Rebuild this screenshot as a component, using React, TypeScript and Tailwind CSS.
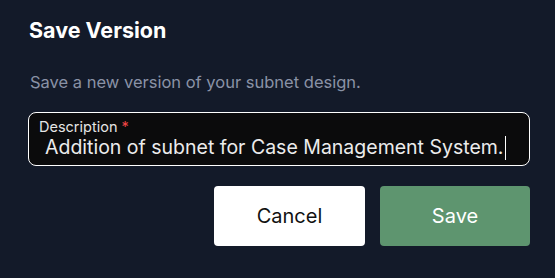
export default function App() {
  return (
    <div className="w-[555px] h-[278px] bg-[#131a29] font-['Inter',sans-serif] pl-[28px] pr-[25px] pt-[15px]">
      <h2 className="pl-[1px] text-[21.5px] leading-[30px] font-bold text-white">Save Version</h2>
      <p className="mt-[26px] pl-[2px] text-[16.5px] leading-[22px] text-[#8a92a6]">
        Save a new version of your subnet design.
      </p>
      <div className="mt-[19px] h-[54px] rounded-[8px] border border-white bg-[#0b0b0c] px-[10px] pt-[6px]">
        <label className="block text-[14.5px] leading-[16px] text-[#e5e5e5]">
          Description <span className="text-[#ef4444]">*</span>
        </label>
        <div className="flex items-center pl-[6px] text-[19.5px] leading-[25px] text-[#ececec]">
          <span>Addition of subnet for Case Management System.</span>
          <span className="ml-px h-[24px] w-px bg-white" />
        </div>
      </div>
      <div className="mt-[20px] flex justify-end gap-[15px]">
        <button className="h-[60px] w-[151px] rounded-[4px] bg-white text-[20px] text-[#111]">Cancel</button>
        <button className="h-[60px] w-[150px] rounded-[4px] bg-[#5e956f] text-[20px] text-white">Save</button>
      </div>
    </div>
  );
}
